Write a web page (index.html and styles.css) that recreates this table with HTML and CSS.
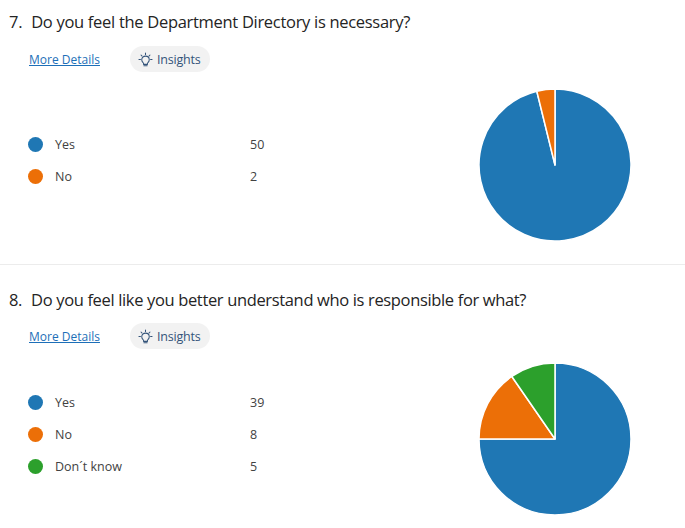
FILE: index.html
```html
<!DOCTYPE html>
<html>
<head>
<meta charset="utf-8">
<link rel="stylesheet" href="styles.css">
</head>
<body>
<section class="question q7">
  <h2 class="title"><span class="num">7.</span>Do you feel the Department Directory is necessary?</h2>
  <div class="actions">
    <a class="details" href="#">More Details</a>
    <span class="insights">
      <svg class="bulb" viewBox="0 0 16 16" width="15" height="15">
        <g fill="none" stroke="currentColor" stroke-width="1.1" stroke-linecap="round">
          <path d="M8 1v1.6M3.2 3.2l1.1 1.1M12.8 3.2l-1.1 1.1M1 8h1.6M13.4 8H15"/>
          <path d="M5.3 11.2C4.4 10.4 4 9.4 4 8.3 4 6.1 5.8 4.4 8 4.4s4 1.7 4 3.9c0 1.1-.4 2.1-1.3 2.9-.4.4-.7.9-.7 1.4v.6H6v-.6c0-.5-.3-1-.7-1.4z"/>
          <path d="M6.3 14.6h3.4"/>
        </g>
      </svg>
      Insights
    </span>
  </div>
  <div class="body">
    <ul class="legend">
      <li><span class="dot blue"></span><span class="label">Yes</span><span class="value">50</span></li>
      <li><span class="dot orange"></span><span class="label">No</span><span class="value">2</span></li>
    </ul>
    <svg class="pie" viewBox="0 0 154 154" width="154" height="154">
      <g stroke="#fff" stroke-width="1.5" stroke-linejoin="round">
        <path fill="#1f77b4" d="M77 77 L77 1 A76 76 0 1 1 58.81 3.21 Z"/>
        <path fill="#ec6f07" d="M77 77 L58.81 3.21 A76 76 0 0 1 77 1 Z"/>
      </g>
    </svg>
  </div>
</section>
<section class="question q8">
  <h2 class="title"><span class="num">8.</span>Do you feel like you better understand who is responsible for what?</h2>
  <div class="actions">
    <a class="details" href="#">More Details</a>
    <span class="insights">
      <svg class="bulb" viewBox="0 0 16 16" width="15" height="15">
        <g fill="none" stroke="currentColor" stroke-width="1.1" stroke-linecap="round">
          <path d="M8 1v1.6M3.2 3.2l1.1 1.1M12.8 3.2l-1.1 1.1M1 8h1.6M13.4 8H15"/>
          <path d="M5.3 11.2C4.4 10.4 4 9.4 4 8.3 4 6.1 5.8 4.4 8 4.4s4 1.7 4 3.9c0 1.1-.4 2.1-1.3 2.9-.4.4-.7.9-.7 1.4v.6H6v-.6c0-.5-.3-1-.7-1.4z"/>
          <path d="M6.3 14.6h3.4"/>
        </g>
      </svg>
      Insights
    </span>
  </div>
  <div class="body">
    <ul class="legend">
      <li><span class="dot blue"></span><span class="label">Yes</span><span class="value">39</span></li>
      <li><span class="dot orange"></span><span class="label">No</span><span class="value">8</span></li>
      <li><span class="dot green"></span><span class="label">Don´t know</span><span class="value">5</span></li>
    </ul>
    <svg class="pie" viewBox="0 0 154 154" width="154" height="154">
      <g stroke="#fff" stroke-width="1.5" stroke-linejoin="round">
        <path fill="#1f77b4" d="M77 77 L77 1 A76 76 0 1 1 1 77 Z"/>
        <path fill="#ec6f07" d="M77 77 L1 77 A76 76 0 0 1 33.83 14.45 Z"/>
        <path fill="#2ca02c" d="M77 77 L33.83 14.45 A76 76 0 0 1 77 1 Z"/>
      </g>
    </svg>
  </div>
</section>
</body>
</html>
```

FILE: styles.css
```css
html, body {
  margin: 0;
  padding: 0;
  background: #ffffff;
}
body {
  font-family: "Open Sans", "Noto Sans", sans-serif;
  color: #242424;
  width: 685px;
  overflow: hidden;
}
.question {
  padding: 10px 0 0 0;
  box-sizing: border-box;
}
.q7 {
  height: 265px;
  border-bottom: 1px solid #ececec;
}
.q8 {
  height: 263px;
  padding-top: 23px;
}
.title {
  margin: 0 0 0 9px;
  font-size: 16.5px;
  font-weight: 400;
  line-height: 24px;
  letter-spacing: -0.3px;
  color: #242424;
  white-space: nowrap;
}
.q8 .title {
  letter-spacing: -0.35px;
}
.num {
  margin-right: 9px;
}
.actions {
  display: flex;
  align-items: center;
  margin: 12px 0 0 29px;
  height: 26px;
}
.q8 .actions {
  margin-top: 11px;
}
.details {
  font-size: 12px;
  color: #1d6fb8;
  text-decoration: underline;
  width: 101px;
}
.insights {
  display: inline-flex;
  align-items: center;
  gap: 4px;
  height: 26px;
  padding: 0 9px 0 8px;
  border-radius: 13px;
  background: #f2f2f2;
  color: #34547a;
  font-size: 12.5px;
  letter-spacing: -0.2px;
}
.bulb {
  display: block;
}
.body {
  display: flex;
  align-items: center;
  margin-top: 16px;
  height: 154px;
}
.q8 .body {
  margin-top: 13px;
}
.legend {
  list-style: none;
  margin: 0 0 0 28px;
  padding: 0 0 10px 0;
  width: 450px;
}
.legend li {
  display: flex;
  align-items: center;
  height: 32px;
  font-size: 12.5px;
  color: #424242;
}
.dot {
  width: 15px;
  height: 15px;
  border-radius: 50%;
  margin-right: 12px;
  flex: none;
}
.dot.blue { background: #1f77b4; }
.dot.orange { background: #ec6f07; }
.dot.green { background: #2ca02c; }
.label {
  width: 195px;
}
.value {
  color: #424242;
}
.pie {
  display: block;
}
```
